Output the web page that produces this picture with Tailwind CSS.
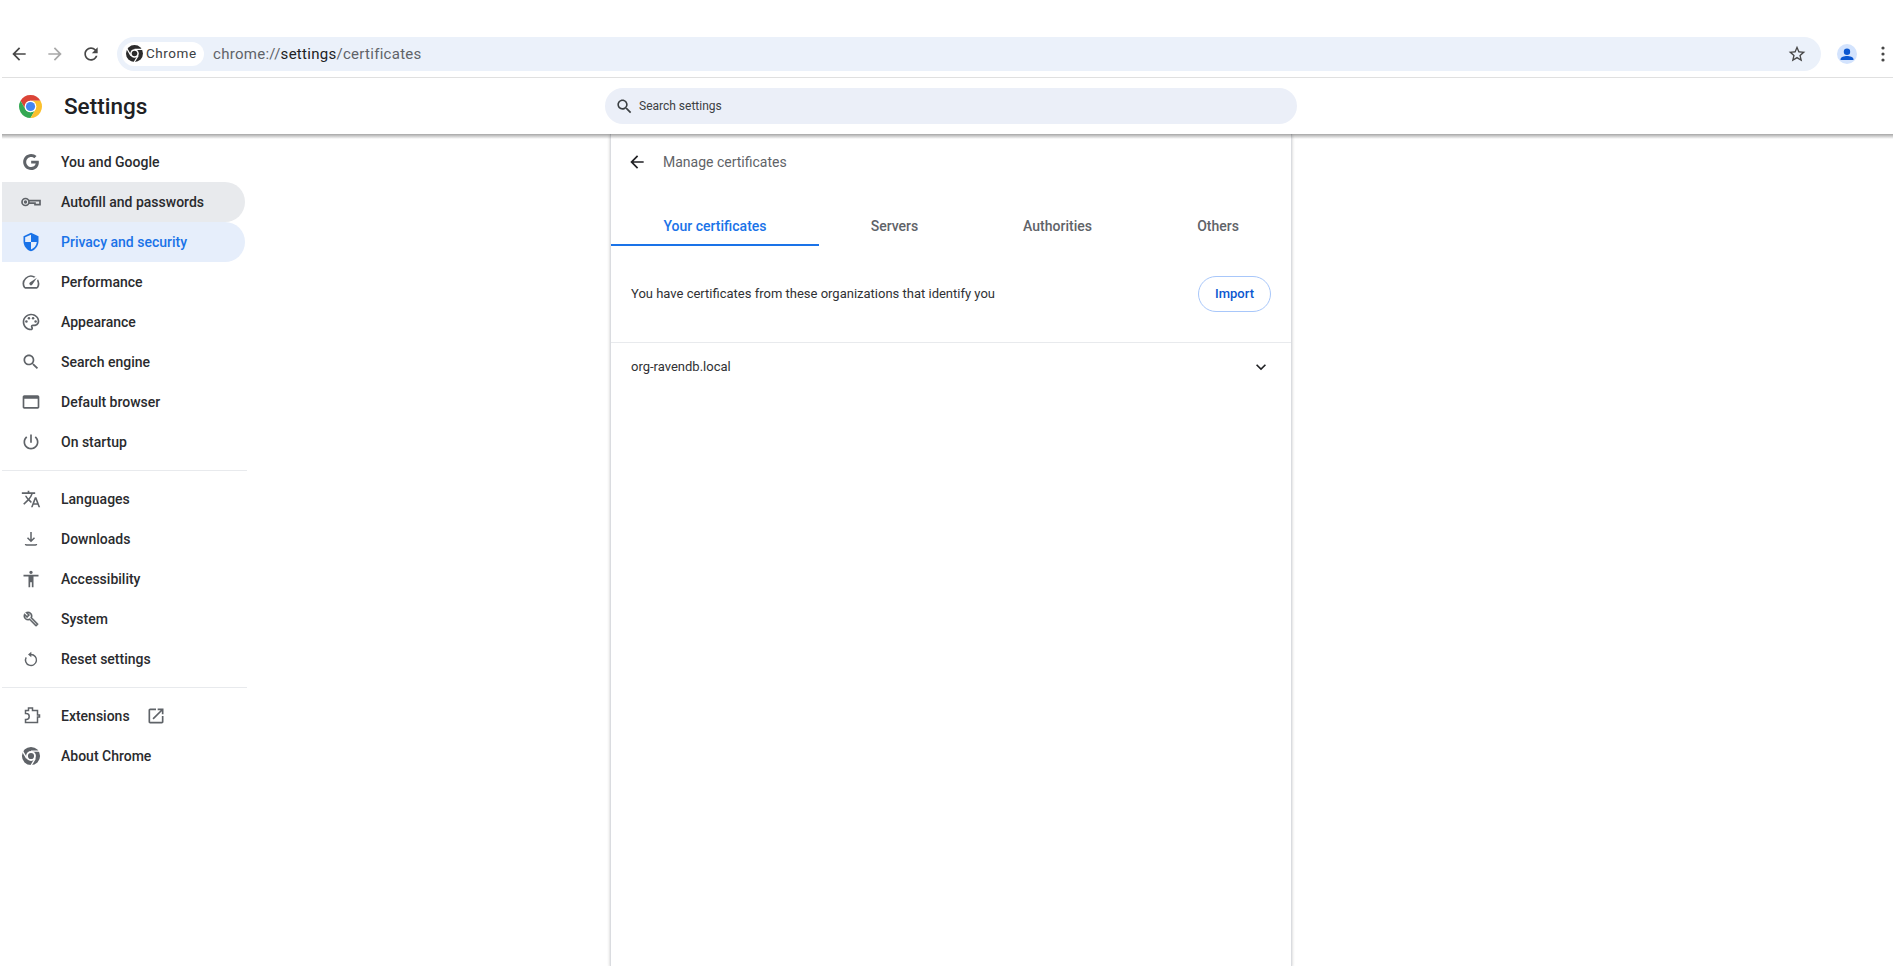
<!DOCTYPE html>
<html lang="en">
<head>
  <meta charset="UTF-8">
  <title>Settings - Manage certificates</title>
  <script src="https://cdn.jsdelivr.net/npm/@tailwindcss/browser@4"></script>
</head>
<body class="bg-white font-['Roboto',sans-serif] text-[#202124] overflow-hidden">
  <div class="w-[1893px] h-[966px] pl-[2px] flex flex-col overflow-hidden">

    <!-- browser toolbar -->
    <div class="h-[78px] shrink-0 pt-[37px] border-b border-[#e0e0e0] flex items-start">
      <div class="w-[115px] h-[34px] flex items-center pl-[7px] gap-[16px]">
        <svg class="w-5 h-5 fill-[#474747]" viewBox="0 0 24 24"><path d="M20 11H7.83l5.59-5.59L12 4l-8 8 8 8 1.41-1.41L7.83 13H20v-2z"/></svg>
        <svg class="w-5 h-5 fill-[#a8a8a8]" viewBox="0 0 24 24"><path d="M4 11h12.17l-5.59-5.59L12 4l8 8-8 8-1.41-1.41L16.17 13H4v-2z"/></svg>
        <svg class="w-5 h-5 fill-[#474747]" viewBox="0 0 24 24"><path d="M17.65 6.35C16.2 4.9 14.21 4 12 4c-4.42 0-7.99 3.58-7.99 8s3.57 8 7.99 8c3.73 0 6.84-2.55 7.73-6h-2.08c-.82 2.33-3.04 4-5.65 4-3.31 0-6-2.69-6-6s2.69-6 6-6c1.66 0 3.14.69 4.22 1.78L13 11h7V4l-2.35 2.35z"/></svg>
      </div>
      <div class="w-[1704px] h-[34px] rounded-full bg-[#ebf1fa] flex items-center pl-[5px] pr-[14px]">
        <div class="h-6 w-[82px] pb-px rounded-full bg-white flex items-center pl-[4px] gap-[3px] text-[13.5px] tracking-[0.55px] text-[#3c4043]">
          <svg class="w-[17px] h-[17px]" viewBox="1 1 22 22"><circle cx="12" cy="12" r="11" fill="#2b2b2b"/><circle cx="12" cy="12" r="5.6" fill="#fff"/><circle cx="12" cy="12" r="3.6" fill="#2b2b2b"/><path d="M12 6.6H22M16.7 14.7L11.5 23.4M7.3 14.7L2.3 6" stroke="#fff" stroke-width="1.5"/></svg>
          <span>Chrome</span>
        </div>
        <div class="ml-[9px] text-[15px] tracking-[0.28px] text-[#5f6368]">chrome://<span class="text-[#202124]">settings</span>/certificates</div>
        <svg class="ml-auto w-5 h-5 fill-[#474747]" viewBox="0 0 24 24"><path d="M22 9.24l-7.19-.62L12 2 9.19 8.63 2 9.24l5.46 4.73L5.82 21 12 17.27 18.18 21l-1.63-7.03L22 9.24zM12 15.4l-3.76 2.27 1-4.28-3.32-2.88 4.38-.38L12 6.1l1.71 4.04 4.38.38-3.32 2.88 1 4.28L12 15.4z"/></svg>
      </div>
      <div class="h-[34px] flex items-center ml-[16px] gap-[24px]">
        <svg class="w-5 h-5" viewBox="0 0 20 20"><circle cx="10" cy="10" r="10" fill="#d3e3fd"/><circle cx="10" cy="7.8" r="3.2" fill="#0b57d0"/><path d="M3.5 16v-.8c0-2 3.8-3.2 6.5-3.2s6.5 1.2 6.5 3.2v.8z" fill="#0b57d0"/></svg>
        <svg class="w-[4px] h-[16px] fill-[#474747]" viewBox="0 0 4 16"><circle cx="2" cy="2" r="1.6"/><circle cx="2" cy="8" r="1.6"/><circle cx="2" cy="14" r="1.6"/></svg>
      </div>
    </div>

    <!-- settings header -->
    <header class="relative z-10 h-[56px] shrink-0 bg-white flex items-center">
      <svg class="ml-[17px] w-[23px] h-[23px]" viewBox="2 2 20 20">
        <path d="M12 2A10 10 0 0 1 20.66 7H12A5 5 0 0 0 7.67 14.5L3.34 7A10 10 0 0 1 12 2Z" fill="#db4437"/>
        <path d="M3.34 7A10 10 0 0 0 12 22L16.33 14.5A5 5 0 0 1 7.67 14.5Z" fill="#34a853"/>
        <path d="M20.66 7H12A5 5 0 0 1 16.33 14.5L12 22A10 10 0 0 0 20.66 7Z" fill="#fbc02d"/>
        <circle cx="12" cy="12" r="5" fill="#fff"/><circle cx="12" cy="12" r="4" fill="#4285f4"/>
      </svg>
      <h1 class="ml-[22px] w-[541px] pt-px text-[22.5px] font-medium text-[#202124]">Settings</h1>
      <div class="h-9 w-[692px] rounded-full bg-[#ebeff8] flex items-center pl-[10px] gap-[5px] text-[12px] text-[#3c4043]">
        <svg class="w-[19px] h-[19px] fill-[#3c4043]" viewBox="0 0 24 24"><path d="M15.5 14h-.79l-.28-.27C15.41 12.59 16 11.11 16 9.5 16 5.91 13.09 3 9.5 3S3 5.91 3 9.5 5.91 16 9.5 16c1.61 0 3.09-.59 4.23-1.57l.27.28v.79l5 4.99L20.49 19l-4.99-5zm-6 0C7.01 14 5 11.99 5 9.5S7.01 5 9.5 5 14 7.01 14 9.5 11.99 14 9.5 14z"/></svg>
        <span>Search settings</span>
      </div>
      <div class="absolute left-0 right-0 top-full h-[5px] bg-gradient-to-b from-black/35 to-transparent"></div>
    </header>

    <div class="flex flex-1 min-h-0">
      <!-- left menu -->
      <nav class="w-[608px] shrink-0 pt-2 text-[14px] font-medium text-[#2a2b2e]">
        <div class="w-[243px] h-10 flex items-center pl-[19px] gap-[20px]">
          <svg class="w-5 h-5 fill-[#5f6368]" viewBox="-3 -3 30 30"><path d="M12.24 10.285V14.4h6.806c-.275 1.765-2.056 5.174-6.806 5.174-4.095 0-7.439-3.389-7.439-7.574s3.345-7.574 7.439-7.574c2.33 0 3.891.989 4.785 1.849l3.254-3.138C18.189 1.186 15.479 0 12.24 0c-6.635 0-12 5.365-12 12s5.365 12 12 12c6.926 0 11.52-4.869 11.52-11.726 0-.788-.085-1.39-.189-1.989H12.24z"/></svg>
          <span>You and Google</span>
        </div>
        <div class="w-[243px] h-10 flex items-center pl-[19px] gap-[20px] bg-[#e8eaed] rounded-r-[20px]">
          <svg class="w-5 h-5 fill-none stroke-[#5f6368]" stroke-width="1.7" viewBox="0 0 20 20"><circle cx="4.5" cy="10" r="3.5"/><circle cx="4.5" cy="10" r="0.8" fill="#5f6368"/><path d="M8 8.6H19V12.6H14V11.2H8"/></svg>
          <span>Autofill and passwords</span>
        </div>
        <div class="w-[243px] h-10 flex items-center pl-[19px] gap-[20px] bg-[#e6eefb] rounded-r-[20px] text-[#1a73e8]">
          <svg class="w-5 h-5 fill-[#1a73e8]" viewBox="0 0 24 24"><path d="M12 1L3 5v6c0 5.55 3.84 10.74 9 12 5.16-1.26 9-6.45 9-12V5l-9-4zm0 10.99h7c-.53 4.12-3.28 7.79-7 8.94V12H5V6.3l7-3.11v8.8z"/></svg>
          <span>Privacy and security</span>
        </div>
        <div class="w-[243px] h-10 flex items-center pl-[19px] gap-[20px]">
          <svg class="w-5 h-5 fill-[#5f6368]" viewBox="0 0 24 24"><path d="M20.38 8.57l-1.23 1.85a8 8 0 0 1-.22 7.58H5.07A8 8 0 0 1 15.58 6.85l1.85-1.23A10 10 0 0 0 3.35 19a2 2 0 0 0 1.72 1h13.85a2 2 0 0 0 1.74-1 10 10 0 0 0-.27-10.44z"/><path d="M10.59 15.41a2 2 0 0 0 2.83 0l5.66-8.49-8.49 5.66a2 2 0 0 0 0 2.83z"/></svg>
          <span>Performance</span>
        </div>
        <div class="w-[243px] h-10 flex items-center pl-[19px] gap-[20px]">
          <svg class="w-5 h-5 fill-[#5f6368]" viewBox="0 0 24 24"><path d="M12 22C6.49 22 2 17.51 2 12S6.49 2 12 2s10 4.04 10 9c0 3.31-2.69 6-6 6h-1.77c-.28 0-.5.22-.5.5 0 .12.05.23.13.33.41.47.64 1.06.64 1.67 0 1.38-1.12 2.5-2.5 2.5zm0-18c-4.41 0-8 3.59-8 8s3.59 8 8 8c.28 0 .5-.22.5-.5 0-.16-.08-.28-.14-.35-.41-.46-.63-1.05-.63-1.65 0-1.38 1.12-2.5 2.5-2.5H16c2.21 0 4-1.79 4-4 0-3.86-3.59-7-8-7z"/><circle cx="6.5" cy="11.5" r="1.5"/><circle cx="9.5" cy="7.5" r="1.5"/><circle cx="14.5" cy="7.5" r="1.5"/><circle cx="17.5" cy="11.5" r="1.5"/></svg>
          <span>Appearance</span>
        </div>
        <div class="w-[243px] h-10 flex items-center pl-[19px] gap-[20px]">
          <svg class="w-5 h-5 fill-[#5f6368]" viewBox="0 0 24 24"><path d="M15.5 14h-.79l-.28-.27C15.41 12.59 16 11.11 16 9.5 16 5.91 13.09 3 9.5 3S3 5.91 3 9.5 5.91 16 9.5 16c1.61 0 3.09-.59 4.23-1.57l.27.28v.79l5 4.99L20.49 19l-4.99-5zm-6 0C7.01 14 5 11.99 5 9.5S7.01 5 9.5 5 14 7.01 14 9.5 11.99 14 9.5 14z"/></svg>
          <span>Search engine</span>
        </div>
        <div class="w-[243px] h-10 flex items-center pl-[19px] gap-[20px]">
          <svg class="w-5 h-5 fill-[#5f6368]" viewBox="0 0 24 24"><path d="M20 4H4c-1.1 0-2 .9-2 2v12c0 1.1.9 2 2 2h16c1.1 0 2-.9 2-2V6c0-1.1-.9-2-2-2zm0 14H4V8h16v10z"/></svg>
          <span>Default browser</span>
        </div>
        <div class="w-[243px] h-10 flex items-center pl-[19px] gap-[20px]">
          <svg class="w-5 h-5 fill-[#5f6368]" viewBox="0 0 24 24"><path d="M13 3h-2v10h2V3zm4.83 2.17l-1.42 1.42C17.99 7.86 19 9.81 19 12c0 3.87-3.13 7-7 7s-7-3.13-7-7c0-2.19 1.01-4.14 2.58-5.42L6.17 5.17C4.23 6.82 3 9.26 3 12c0 4.97 4.03 9 9 9s9-4.03 9-9c0-2.74-1.23-5.18-3.17-6.83z"/></svg>
          <span>On startup</span>
        </div>
        <div class="w-[245px] h-px my-2 bg-[#e8eaed]"></div>
        <div class="w-[243px] h-10 flex items-center pl-[19px] gap-[20px]">
          <svg class="w-5 h-5 fill-[#5f6368]" viewBox="0 0 24 24"><path d="M12.87 15.07l-2.54-2.51.03-.03c1.74-1.94 2.98-4.17 3.71-6.53H17V4h-7V2H8v2H1v1.99h11.17C11.5 7.92 10.44 9.75 9 11.35 8.07 10.32 7.3 9.19 6.69 8h-2c.73 1.63 1.73 3.17 2.98 4.56l-5.09 5.02L4 19l5-5 3.11 3.11.76-2.04zM18.5 10h-2L12 22h2l1.12-3h4.75L21 22h2l-4.5-12zm-2.62 7l1.62-4.33L19.12 17h-3.24z"/></svg>
          <span>Languages</span>
        </div>
        <div class="w-[243px] h-10 flex items-center pl-[19px] gap-[20px]">
          <svg class="w-5 h-5 fill-none stroke-[#5f6368]" stroke-width="1.5" viewBox="0 0 20 20"><path d="M10 3v9M6.5 8.8l3.5 3.5 3.5-3.5M4.5 15c0 .6.4 1 1 1h9c.6 0 1-.4 1-1"/></svg>
          <span>Downloads</span>
        </div>
        <div class="w-[243px] h-10 flex items-center pl-[19px] gap-[20px]">
          <svg class="w-5 h-5 fill-[#5f6368]" viewBox="0 0 24 24"><path d="M12 2c1.1 0 2 .9 2 2s-.9 2-2 2-2-.9-2-2 .9-2 2-2zm9 7h-6v13h-2v-6h-2v6H9V9H3V7h18v2z"/></svg>
          <span>Accessibility</span>
        </div>
        <div class="w-[243px] h-10 flex items-center pl-[19px] gap-[20px]">
          <svg class="w-5 h-5 fill-[#5f6368] stroke-[#5f6368]" stroke-width="0.5" viewBox="-3 -3 30 30"><path d="M22.61 18.99l-9.08-9.08c.93-2.34.45-5.1-1.44-7C9.79.61 6.21.4 3.66 2.26L7.5 6.11 6.08 7.52 2.25 3.69C.39 6.23.6 9.82 2.9 12.11c1.86 1.86 4.57 2.35 6.89 1.48l9.11 9.11c.39.39 1.02.39 1.41 0l2.3-2.3c.4-.38.4-1.01 0-1.41zm-3 1.6l-9.46-9.46c-.61.45-1.29.72-2 .82-1.36.2-2.79-.21-3.83-1.25C3.37 9.76 2.93 8.5 3 7.26l3.09 3.09 4.24-4.24-3.09-3.09c1.24-.07 2.49.37 3.44 1.31 1.08 1.08 1.49 2.57 1.24 3.96-.12.71-.42 1.37-.88 1.96l9.45 9.45-.88.88z"/></svg>
          <span>System</span>
        </div>
        <div class="w-[243px] h-10 flex items-center pl-[19px] gap-[20px]">
          <svg class="w-5 h-5 fill-none stroke-[#5f6368]" stroke-width="1.4" viewBox="0 0 20 20"><path d="M10 5.5A5.5 5.5 0 1 1 5.2 8.3"/><path d="M10.3 2.8L7 5.5l3.3 2.7z" fill="#5f6368" stroke="none"/></svg>
          <span>Reset settings</span>
        </div>
        <div class="w-[245px] h-px my-2 bg-[#e8eaed]"></div>
        <div class="w-[243px] h-10 flex items-center pl-[19px] gap-[20px]">
          <svg class="w-5 h-5 fill-none stroke-[#5f6368]" stroke-width="1.5" viewBox="0 0 20 20"><path d="M4.5 4.5H7.5V2H11.5V4.5H16.5V9H18.5V11H16.5V16.5H4.5V13.5H5.2A3 3 0 0 0 5.2 7.5H4.5Z"/></svg>
          <span>Extensions</span>
          <svg class="w-5 h-5 ml-[-4px] fill-[#5f6368]" viewBox="0 0 24 24"><path d="M19 19H5V5h7V3H5c-1.11 0-2 .9-2 2v14c0 1.1.89 2 2 2h14c1.1 0 2-.9 2-2v-7h-2v7zM14 3v2h3.59l-9.83 9.83 1.41 1.41L19 6.41V10h2V3h-7z"/></svg>
        </div>
        <div class="w-[243px] h-10 flex items-center pl-[19px] gap-[20px]">
          <svg class="w-5 h-5" viewBox="1 1 22 22"><circle cx="12" cy="12" r="10" fill="#5f6368"/><circle cx="12" cy="12" r="5.4" fill="#fff"/><circle cx="12" cy="12" r="3.4" fill="#5f6368"/><path d="M12 6.6H22M16.7 14.7L11.5 23.4M7.3 14.7L2.3 6" stroke="#fff" stroke-width="1.5"/></svg>
          <span>About Chrome</span>
        </div>
      </nav>

      <!-- certificates card -->
      <main class="w-[682px] shrink-0 bg-white border-x border-[#dadce0] shadow-[0_1px_3px_rgba(0,0,0,0.22)]">
        <div class="h-14 flex items-center pl-[16px] gap-[16px] text-[14px] text-[#5f6368]">
          <svg class="w-5 h-5 fill-[#202124]" viewBox="0 0 24 24"><path d="M20 11H7.83l5.59-5.59L12 4l-8 8 8 8 1.41-1.41L7.83 13H20v-2z"/></svg>
          <span>Manage certificates</span>
        </div>
        <div class="flex h-[56px] text-[14px] font-medium text-[#5f6368]">
          <div class="w-[208px] pt-[18px] flex items-center justify-center text-[#1a73e8] border-b-2 border-[#1a73e8]">Your certificates</div>
          <div class="w-[151px] pt-[16px] flex items-center justify-center">Servers</div>
          <div class="w-[175px] pt-[16px] flex items-center justify-center">Authorities</div>
          <div class="w-[146px] pt-[16px] flex items-center justify-center">Others</div>
        </div>
        <div class="h-[97px] flex items-center justify-between pl-[20px] pr-[20px] border-b border-[#e8eaed] text-[13px] text-[#303134]">
          <span>You have certificates from these organizations that identify you</span>
          <button class="h-9 w-[73px] rounded-full border border-[#a8c7fa] text-[13px] font-medium text-[#0b57d0]">Import</button>
        </div>
        <div class="h-[48px] flex items-center justify-between pl-[20px] pr-[20px] text-[13px] text-[#303134]">
          <span>org-ravendb.local</span>
          <svg class="w-5 h-5 fill-[#202124]" viewBox="0 0 24 24"><path d="M16.59 8.59L12 13.17 7.41 8.59 6 10l6 6 6-6z"/></svg>
        </div>
      </main>
    </div>
  </div>
</body>
</html>
